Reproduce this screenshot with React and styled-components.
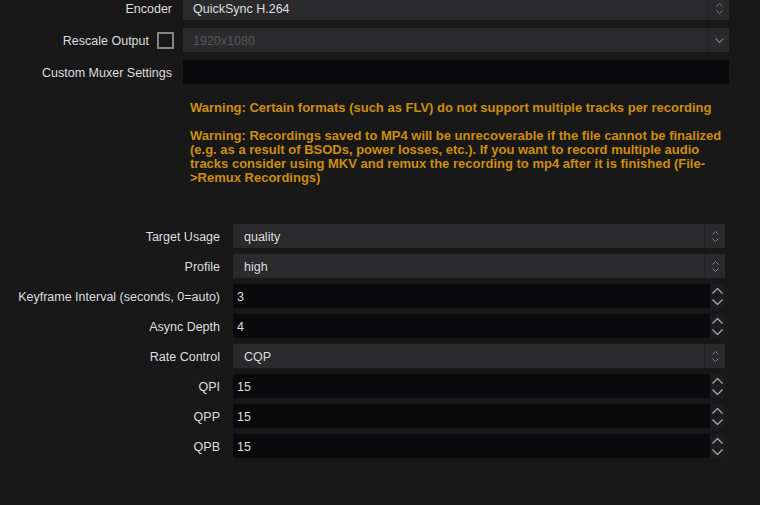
import React from "react";
import styled, { createGlobalStyle } from "styled-components";

const Global = createGlobalStyle`
  html, body { margin: 0; padding: 0; background: #181818; overflow: hidden; }
  * { box-sizing: border-box; }
`;

const Page = styled.div`
  width: 760px;
  height: 505px;
  background: #181818;
  font-family: "Liberation Sans", Arial, sans-serif;
  font-size: 12.5px;
  color: #dedede;
  overflow: hidden;
`;

const Form = styled.div`
  display: grid;
  grid-template-columns: ${(p) => p.$label}px 1fr;
  column-gap: ${(p) => p.$gap}px;
  row-gap: ${(p) => p.$rowGap}px;
  padding-right: ${(p) => p.$right}px;
  margin-top: ${(p) => p.$top}px;
`;

const Label = styled.div`
  display: flex;
  align-items: center;
  justify-content: flex-end;
  gap: 8px;
  height: 24px;
  padding-top: 1px;
  white-space: nowrap;
`;

const Check = styled.span`
  width: 17px;
  height: 17px;
  border: 2px solid #858585;
  background: #181818;
  margin-right: -2px;
  margin-top: -1px;
`;

const Combo = styled.div`
  display: flex;
  height: 24px;
  background: #2a2a2d;
  color: ${(p) => (p.$disabled ? "#575757" : "#dedede")};
`;

const ComboText = styled.div`
  flex: 1;
  display: flex;
  align-items: center;
  padding-top: 1px;
  padding-left: ${(p) => p.$pad}px;
`;

const ComboArrow = styled.div`
  width: 21px;
  border-left: 1px solid #232326;
  display: flex;
  flex-direction: column;
  align-items: center;
  justify-content: center;
  gap: 3px;
`;

const TextBox = styled.div`
  height: 24px;
  background: #0a0a0c;
`;

const Spin = styled.div`
  display: flex;
  height: 24px;
`;

const SpinText = styled.div`
  flex: 1;
  background: #0a0a0c;
  display: flex;
  align-items: center;
  padding-top: 1px;
  padding-left: 4px;
`;

const SpinButtons = styled.div`
  width: 15px;
  background: #1c1c21;
  border-radius: 3px;
  display: flex;
  flex-direction: column;
  align-items: center;
  justify-content: space-around;
  padding: 1px 0;
`;

const Warnings = styled.div`
  padding-left: 190px;
  margin-top: 17px;
  color: #cd8d0d;
  font-weight: bold;
  font-size: 13px;
  line-height: 14px;
  width: 735px;
`;

const Para = styled.p`
  margin: 0 0 14px 0;
`;

const Chevron = ({ up, w = 7, h = 4, color = "#7c7c7c", sw = 1 }) => (
  <svg width={w} height={h} viewBox={`0 0 ${w} ${h}`} style={{ display: "block" }}>
    <polyline
      points={up ? `0.5,${h - 0.5} ${w / 2},0.5 ${w - 0.5},${h - 0.5}` : `0.5,0.5 ${w / 2},${h - 0.5} ${w - 0.5},0.5`}
      fill="none"
      stroke={color}
      strokeWidth={sw}
    />
  </svg>
);

const UpDown = () => (
  <ComboArrow>
    <Chevron up />
    <Chevron />
  </ComboArrow>
);

const ComboBox = ({ value, pad = 11 }) => (
  <Combo>
    <ComboText $pad={pad}>{value}</ComboText>
    <UpDown />
  </Combo>
);

const SpinBox = ({ value }) => (
  <Spin>
    <SpinText>{value}</SpinText>
    <SpinButtons>
      <Chevron up w={11} h={6} color="#a8a8a8" sw={1.3} />
      <Chevron w={11} h={6} color="#a8a8a8" sw={1.3} />
    </SpinButtons>
  </Spin>
);

export default function App() {
  return (
    <Page>
      <Global />
      <Form $label={172} $gap={11} $rowGap={8} $right={31} $top={-4}>
        <Label>Encoder</Label>
        <ComboBox value="QuickSync H.264" pad={10} />
        <Label>
          Rescale Output <Check />
        </Label>
        <Combo $disabled>
          <ComboText $pad={10}>1920x1080</ComboText>
          <ComboArrow>
            <Chevron w={9} h={5} color="#7a7a7a" sw={1.2} />
          </ComboArrow>
        </Combo>
        <Label>Custom Muxer Settings</Label>
        <TextBox />
      </Form>
      <Warnings>
        <Para>Warning: Certain formats (such as FLV) do not support multiple tracks per recording</Para>
        <Para>
          Warning: Recordings saved to MP4 will be unrecoverable if the file cannot be finalized (e.g. as a result of
          BSODs, power losses, etc.). If you want to record multiple audio tracks consider using MKV and remux the
          recording to mp4 after it is finished (File-&gt;Remux Recordings)
        </Para>
      </Warnings>
      <Form $label={220} $gap={13} $rowGap={6} $right={35} $top={39}>
        <Label>Target Usage</Label>
        <ComboBox value="quality" />
        <Label>Profile</Label>
        <ComboBox value="high" />
        <Label>Keyframe Interval (seconds, 0=auto)</Label>
        <SpinBox value="3" />
        <Label>Async Depth</Label>
        <SpinBox value="4" />
        <Label>Rate Control</Label>
        <ComboBox value="CQP" />
        <Label>QPI</Label>
        <SpinBox value="15" />
        <Label>QPP</Label>
        <SpinBox value="15" />
        <Label>QPB</Label>
        <SpinBox value="15" />
      </Form>
    </Page>
  );
}
